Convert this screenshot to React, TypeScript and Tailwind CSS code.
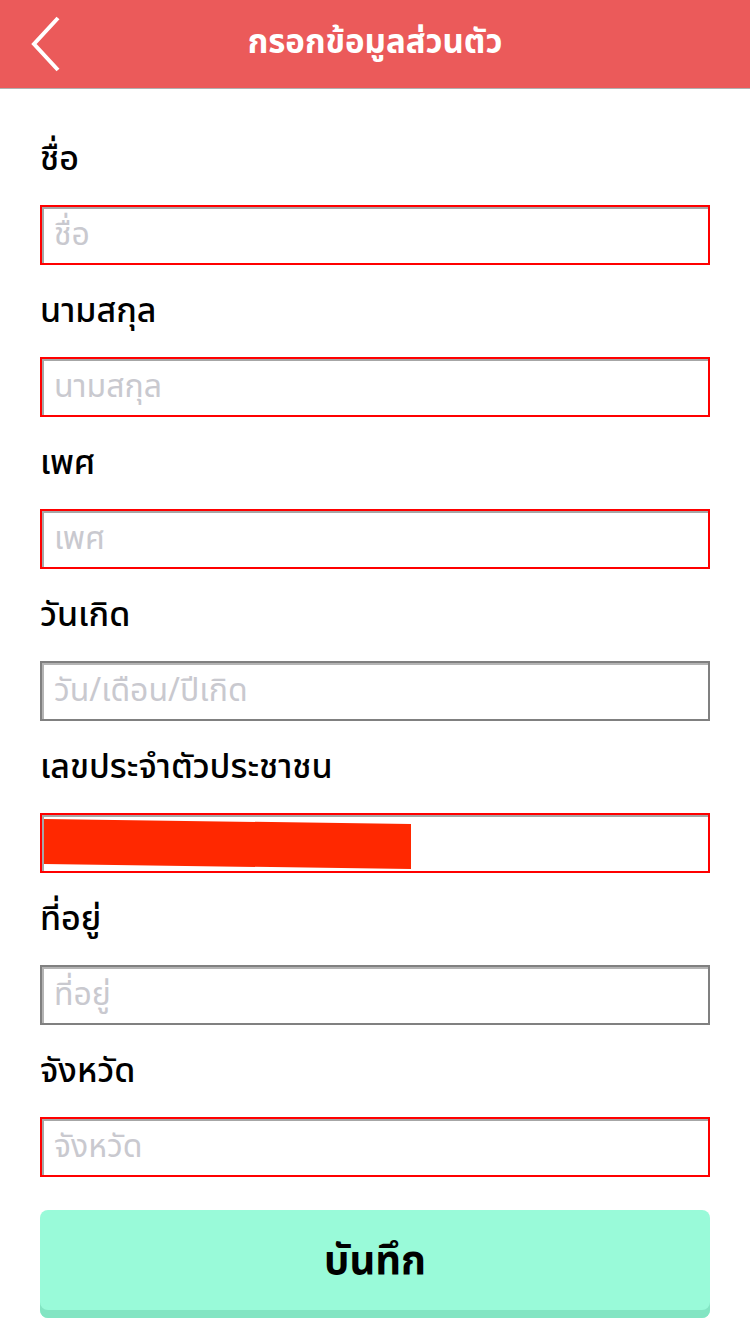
const fields = [
  { label: "ชื่อ", placeholder: "ชื่อ", tone: "red" },
  { label: "นามสกุล", placeholder: "นามสกุล", tone: "red" },
  { label: "เพศ", placeholder: "เพศ", tone: "red" },
  { label: "วันเกิด", placeholder: "วัน/เดือน/ปีเกิด", tone: "gray" },
  { label: "เลขประจำตัวประชาชน", placeholder: "", tone: "red", redacted: true },
  { label: "ที่อยู่", placeholder: "ที่อยู่", tone: "gray" },
  { label: "จังหวัด", placeholder: "จังหวัด", tone: "red" },
  { label: "อำเภอ", placeholder: "อำเภอ", tone: "red" },
];

const Field = ({
  label,
  placeholder,
  tone,
  redacted,
}: {
  label: string;
  placeholder: string;
  tone: string;
  redacted?: boolean;
}) => (
  <div className="flex flex-col">
    <div className="h-[92px] flex items-center text-[34px] font-medium text-black">
      {label}
    </div>
    <div
      className={
        tone === "red"
          ? "relative h-[60px] border-2 border-[#ff0000] shadow-[inset_2px_2px_0_#a6a6a6] flex items-center px-3"
          : "relative h-[60px] border-2 border-[#808080] shadow-[inset_2px_2px_0_#b4b4b4] flex items-center px-3"
      }
    >
      <span className="text-[32px] text-[#c9c9cf]">{placeholder}</span>
      {redacted && (
        <svg
          className="absolute left-0 top-0"
          width="670"
          height="60"
          viewBox="0 0 670 60"
        >
          <polygon points="2,4 369,9 369,54 2,49" fill="#ff2800" />
        </svg>
      )}
    </div>
  </div>
);

export default function App() {
  return (
    <div
      className="w-[750px] h-[1334px] bg-white flex flex-col overflow-hidden"
      style={{ fontFamily: '"Noto Sans Thai", "Noto Sans", "DejaVu Sans", sans-serif' }}
    >
      <header className="relative h-[89px] shrink-0 bg-[#eb5a5a] border-b border-[#b0b0b0] flex items-center justify-center">
        <svg
          className="absolute left-[30px] top-[16px]"
          width="34"
          height="56"
          viewBox="0 0 34 56"
        >
          <polyline
            points="28,2 4,28 28,54"
            fill="none"
            stroke="#fff"
            strokeWidth="4"
          />
        </svg>
        <h1 className="text-[33px] font-bold text-white">กรอกข้อมูลส่วนตัว</h1>
      </header>
      <main className="h-[1107px] shrink-0 overflow-hidden px-[40px] pt-[24px]">
        <div className="flex flex-col">
          {fields.map((f) => (
            <Field key={f.label} {...f} />
          ))}
        </div>
      </main>
      <div className="px-[40px] pt-[14px]">
        <button className="w-full h-[108px] rounded-[8px] bg-[#99fad9] shadow-[inset_0_-8px_0_#83e5c3] text-[40px] font-bold text-black flex items-center justify-center pb-[4px]">
          บันทึก
        </button>
      </div>
    </div>
  );
}
